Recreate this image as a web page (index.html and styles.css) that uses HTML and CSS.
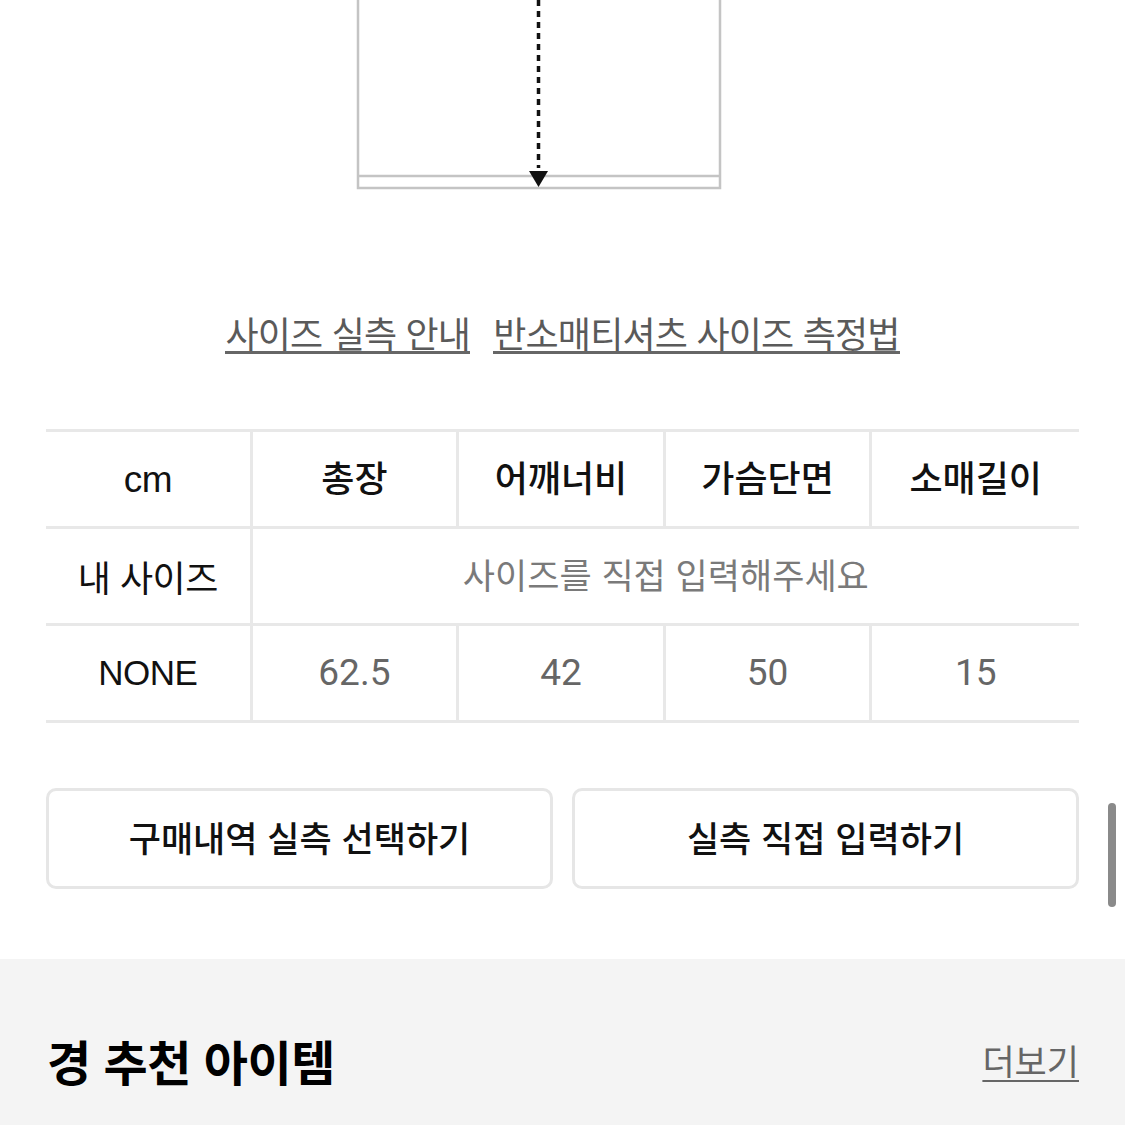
FILE: index.html
```html
<!DOCTYPE html>
<html lang="ko">
<head>
<meta charset="utf-8">
<link rel="stylesheet" href="styles.css">
</head>
<body>
<div class="page">
  <div class="diagram">
    <svg width="1125" height="200" viewBox="0 0 1125 200">
      <path d="M358 0 V188 H720 V0" fill="none" stroke="#c4c4c4" stroke-width="2.5"/>
      <line x1="358" y1="176" x2="720" y2="176" stroke="#c4c4c4" stroke-width="2.5"/>
      <line x1="538.5" y1="0" x2="538.5" y2="168" stroke="#111" stroke-width="3.5" stroke-dasharray="6 5"/>
      <polygon points="529,171 548,171 538.5,187" fill="#111"/>
    </svg>
  </div>

  <div class="links">
    <a class="link">사이즈 실측 안내</a>
    <a class="link">반소매티셔츠 사이즈 측정법</a>
  </div>

  <div class="size-table">
    <div class="cell label unit">cm</div>
    <div class="cell head">총장</div>
    <div class="cell head">어깨너비</div>
    <div class="cell head">가슴단면</div>
    <div class="cell head">소매길이</div>

    <div class="cell label">내 사이즈</div>
    <div class="cell hint">사이즈를 직접 입력해주세요</div>

    <div class="cell label latin">NONE</div>
    <div class="cell val">62.5</div>
    <div class="cell val">42</div>
    <div class="cell val">50</div>
    <div class="cell val">15</div>
  </div>

  <div class="buttons">
    <button class="btn">구매내역 실측 선택하기</button>
    <button class="btn">실측 직접 입력하기</button>
  </div>

  <div class="scrollbar"></div>

  <section class="recommend">
    <h2 class="rec-title">경 추천 아이템</h2>
    <a class="more">더보기</a>
  </section>
</div>
</body>
</html>
```

FILE: styles.css
```css
html, body {
  margin: 0;
  padding: 0;
  background: #fff;
}
body {
  font-family: "Noto Sans CJK KR", "Noto Sans", sans-serif;
  color: #111;
  width: 1125px;
  height: 1125px;
  overflow: hidden;
}
.page {
  position: relative;
  width: 1125px;
}
.diagram {
  height: 200px;
}
.diagram svg {
  display: block;
}
.links {
  display: flex;
  justify-content: center;
  gap: 23px;
  margin-top: 109px;
  height: 46px;
}
.link {
  font-size: 36px;
  line-height: 46px;
  height: 42px;
  color: #5a5a5a;
  border-bottom: 3px solid #666;
  letter-spacing: -0.8px;
}
.size-table {
  margin: 74px 46px 0 46px;
  width: 1033px;
  display: grid;
  grid-template-columns: repeat(5, 1fr);
  border-top: 3px solid #e8e8e8;
}
.cell {
  box-sizing: border-box;
  height: 97px;
  border-bottom: 3px solid #e8e8e8;
  border-right: 3px solid #e8e8e8;
  display: flex;
  align-items: center;
  justify-content: center;
  font-size: 36px;
  font-weight: 500;
  color: #111;
}
.cell:nth-child(5),
.cell:nth-child(7),
.cell:nth-child(12) {
  border-right: none;
}
.head {
  padding-bottom: 6px;
}
.label {
  font-weight: 400;
  letter-spacing: -0.5px;
}
.unit {
  font-family: "Liberation Sans", Arial, sans-serif;
  font-size: 37px;
  font-weight: 400;
  padding-top: 2px;
}
.latin {
  font-family: "Liberation Sans", Arial, sans-serif;
  font-size: 35px;
  font-weight: 400;
}
.hint {
  grid-column: span 4;
  color: #7a7a7a;
  font-weight: 400;
  font-size: 35px;
  padding-bottom: 6px;
}
.val {
  font-family: "Roboto", sans-serif;
  color: #666;
  font-weight: 400;
  font-size: 37px;
  padding-bottom: 2px;
}
.buttons {
  display: flex;
  gap: 19px;
  margin: 65px 46px 0 46px;
}
.btn {
  flex: 1;
  height: 101px;
  background: #fff;
  border: 3px solid #e6e6e6;
  border-radius: 10px;
  font-family: "Noto Sans CJK KR", sans-serif;
  font-size: 35px;
  font-weight: 500;
  color: #111;
  padding: 0 0 5px 0;
}
.scrollbar {
  position: absolute;
  left: 1108px;
  top: 803px;
  width: 8px;
  height: 104px;
  border-radius: 4px;
  background: #8a8a8a;
}
.recommend {
  margin-top: 70px;
  background: #f4f4f4;
  height: 166px;
  display: flex;
  justify-content: space-between;
  align-items: flex-start;
  padding: 0 46px 0 47px;
}
.rec-title {
  margin: 67px 0 0 0;
  font-size: 48px;
  font-weight: 700;
  line-height: 68px;
  letter-spacing: -0.5px;
  color: #000;
}
.more {
  margin-top: 78px;
  font-size: 35px;
  line-height: 46px;
  color: #666;
  text-decoration: underline;
  text-underline-offset: 5px;
  text-decoration-thickness: 2px;
}
```
